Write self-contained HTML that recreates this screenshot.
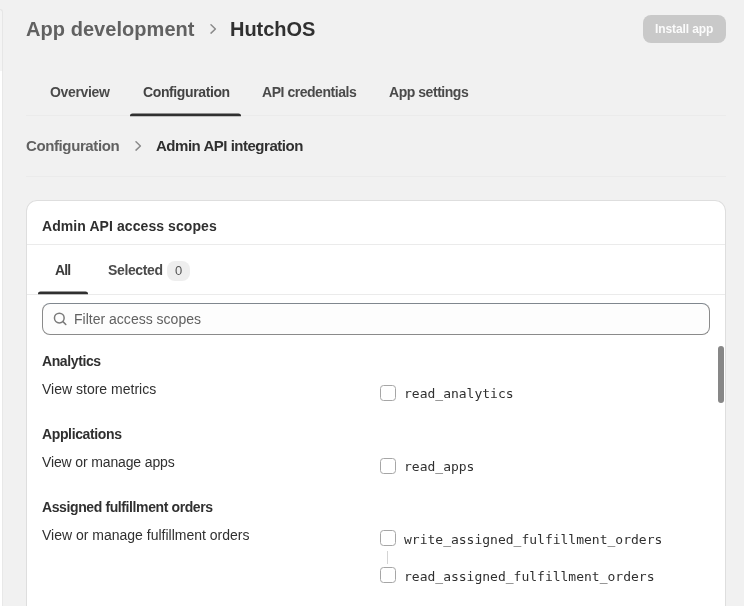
<!DOCTYPE html>
<html lang="en">
<head>
<meta charset="utf-8">
<title>HutchOS - App development - Admin API integration</title>
<style>
html,body{margin:0;padding:0}
body{width:744px;height:606px;overflow:hidden;background:#f1f1f1;font-family:"Liberation Sans",sans-serif}
.abs{position:absolute}
.t{position:absolute;margin:0;padding:0;white-space:nowrap;display:block;text-decoration:none;will-change:transform}
svg{position:absolute;overflow:visible}
/* left rail sliver */
#strip1{left:0;top:9px;width:2px;height:61px;background:#f4f4f4;border-right:1px solid #e6e6e6;border-top:1px solid #e6e6e6;border-top-right-radius:4px}
#strip2{left:0;top:71px;width:2px;height:535px;background:#fff;border-right:1px solid #e8e8e8}
/* page header */
#btn{left:643px;top:15px;width:83px;height:28px;border-radius:8px;background:#c9c9c9}
.hr{position:absolute;height:1px;background:#ebebeb}
/* card */
#card{left:26px;top:200px;width:700px;height:420px;background:#fff;border-radius:11px;box-shadow:0 0 0 1px #dedede inset}
#badge{left:167px;top:261px;width:23px;height:20px;border-radius:8px;background:#eeeeee}
#search{left:42px;top:303px;width:666px;height:30px;border:1px solid #8a8a8a;border-top-color:#80878e;border-radius:8px;background:#fdfdfd}
#sb{left:718px;top:346px;width:6px;height:57px;border-radius:3px;background:#878787}
.cb{position:absolute;left:380px;width:14px;height:14px;border:1px solid #a6a6a6;border-radius:3.5px;background:#fff}
#conn{left:387px;top:551px;width:1px;height:13px;background:#d4d4d4}
/* text placement */
#t1{left:26.20px;top:19.00px;font:700 20px/20px "Liberation Sans", sans-serif;color:#616161;letter-spacing:0.051px}
#t2{left:230.15px;top:19.00px;font:700 20px/20px "Liberation Sans", sans-serif;color:#303030;letter-spacing:-0.030px}
#t3{left:655.00px;top:23.00px;font:700 12px/12px "Liberation Sans", sans-serif;color:#fbfbfb;letter-spacing:-0.108px}
#t4{left:50.00px;top:85.00px;font:700 14px/14px "Liberation Sans", sans-serif;color:#4a4a4a;letter-spacing:-0.347px}
#t5{left:142.96px;top:85.00px;font:700 14px/14px "Liberation Sans", sans-serif;color:#434343;letter-spacing:-0.383px}
#t6{left:261.90px;top:85.00px;font:700 14px/14px "Liberation Sans", sans-serif;color:#4a4a4a;letter-spacing:-0.463px}
#t7{left:389.04px;top:85.00px;font:700 14px/14px "Liberation Sans", sans-serif;color:#4a4a4a;letter-spacing:-0.458px}
#t8{left:26.00px;top:138.00px;font:700 15px/15px "Liberation Sans", sans-serif;color:#616161;letter-spacing:-0.390px}
#t9{left:156.03px;top:138.00px;font:700 15px/15px "Liberation Sans", sans-serif;color:#303030;letter-spacing:-0.482px}
#t10{left:42.04px;top:219.00px;font:700 14px/14px "Liberation Sans", sans-serif;color:#303030;letter-spacing:0.078px}
#t11{left:55.00px;top:263.00px;font:700 14px/14px "Liberation Sans", sans-serif;color:#3a3a3a;letter-spacing:-0.855px}
#t12{left:108.30px;top:263.00px;font:700 14px/14px "Liberation Sans", sans-serif;color:#4a4a4a;letter-spacing:-0.360px}
#t13{left:174.85px;top:264.00px;font:400 13px/13px "Liberation Sans", sans-serif;color:#555555;letter-spacing:0.000px}
#t14{left:74.12px;top:312.00px;font:400 14px/14px "Liberation Sans", sans-serif;color:#616161;letter-spacing:0.009px}
#t15{left:42.20px;top:354.00px;font:700 14px/14px "Liberation Sans", sans-serif;color:#303030;letter-spacing:-0.394px}
#t16{left:42.20px;top:382.00px;font:400 14px/14px "Liberation Sans", sans-serif;color:#303030;letter-spacing:0.005px}
#t17{left:42.20px;top:427.00px;font:700 14px/14px "Liberation Sans", sans-serif;color:#303030;letter-spacing:-0.366px}
#t18{left:42.20px;top:455.00px;font:400 14px/14px "Liberation Sans", sans-serif;color:#303030;letter-spacing:-0.135px}
#t19{left:42.20px;top:500.00px;font:700 14px/14px "Liberation Sans", sans-serif;color:#303030;letter-spacing:-0.391px}
#t20{left:42.20px;top:528.00px;font:400 14px/14px "Liberation Sans", sans-serif;color:#303030;letter-spacing:-0.003px}
#m1{left:404.34px;top:387.00px;font:400 13px/13px "DejaVu Sans Mono", "Liberation Mono", monospace;color:#303030;letter-spacing:0.000px}
#m2{left:404.34px;top:460.00px;font:400 13px/13px "DejaVu Sans Mono", "Liberation Mono", monospace;color:#303030;letter-spacing:0.000px}
#m3{left:404.34px;top:533.00px;font:400 13px/13px "DejaVu Sans Mono", "Liberation Mono", monospace;color:#303030;letter-spacing:0.000px}
#m4{left:404.34px;top:570.00px;font:400 13px/13px "DejaVu Sans Mono", "Liberation Mono", monospace;color:#303030;letter-spacing:0.000px}
</style>
</head>
<body>
<div class="abs ns" id="strip1"></div>
<div class="abs ns" id="strip2"></div>

<header>
  <nav aria-label="Breadcrumb">
    <a class="t" id="t1">App development</a>
    <svg class="ns" style="left:209px;top:23px" width="9" height="12" viewBox="0 0 9 12"><path d="M2 1.8 L6.4 6.05 L2 10.1" fill="none" stroke="#8a8a8a" stroke-width="1.5" stroke-linecap="round" stroke-linejoin="round"/></svg>
    <h1 class="t" id="t2">HutchOS</h1>
  </nav>
  <div class="abs ns" id="btn" role="button" aria-disabled="true"></div>
  <span class="t" id="t3">Install app</span>
</header>

<nav aria-label="App sections">
  <div class="hr ns" style="left:26px;top:115px;width:700px"></div>
  <a class="t" id="t4">Overview</a>
  <a class="t" id="t5">Configuration</a>
  <a class="t" id="t6">API credentials</a>
  <a class="t" id="t7">App settings</a>
</nav>

<main>
  <nav aria-label="Configuration breadcrumb">
    <a class="t" id="t8">Configuration</a>
    <svg class="ns" style="left:134px;top:140px" width="9" height="12" viewBox="0 0 9 12"><path d="M2 1.8 L6.4 6.05 L2 10.1" fill="none" stroke="#8a8a8a" stroke-width="1.5" stroke-linecap="round" stroke-linejoin="round"/></svg>
    <span class="t" id="t9">Admin API integration</span>
    <div class="hr ns" style="left:26px;top:176px;width:700px"></div>
  </nav>

  <section aria-label="Admin API access scopes">
    <div class="abs ns" id="card"></div>
    <h2 class="t" id="t10">Admin API access scopes</h2>
    <div class="hr ns" style="left:27px;top:244px;width:698px"></div>

    <div role="tablist">
      <span class="t" id="t11" role="tab">All</span>
      <span class="t" id="t12" role="tab">Selected</span>
      <div class="abs ns" id="badge"></div>
      <span class="t" id="t13">0</span>
      <div class="hr ns" style="left:27px;top:294px;width:698px"></div>
    </div>

    <div role="search">
      <div class="abs ns" id="search"></div>
      <svg class="ns" style="left:53px;top:312px" width="14" height="14" viewBox="0 0 14 14"><circle cx="6.3" cy="6.05" r="4.85" fill="none" stroke="#7a7a7a" stroke-width="1.5"/><path d="M9.95 9.6 L12.8 12.5" stroke="#7a7a7a" stroke-width="1.5" stroke-linecap="round"/></svg>
      <span class="t" id="t14">Filter access scopes</span>
    </div>
    <div class="abs ns" id="sb"></div>

    <div class="scope-group">
      <h3 class="t" id="t15">Analytics</h3>
      <p class="t" id="t16">View store metrics</p>
      <div class="cb ns" style="top:385px"></div>
      <label class="t" id="m1">read_analytics</label>
    </div>

    <div class="scope-group">
      <h3 class="t" id="t17">Applications</h3>
      <p class="t" id="t18">View or manage apps</p>
      <div class="cb ns" style="top:458px"></div>
      <label class="t" id="m2">read_apps</label>
    </div>

    <div class="scope-group">
      <h3 class="t" id="t19">Assigned fulfillment orders</h3>
      <p class="t" id="t20">View or manage fulfillment orders</p>
      <div class="cb ns" style="top:530px"></div>
      <label class="t" id="m3">write_assigned_fulfillment_orders</label>
      <div class="abs ns" id="conn"></div>
      <div class="cb ns" style="top:567px"></div>
      <label class="t" id="m4">read_assigned_fulfillment_orders</label>
    </div>
  </section>
</main>

<!-- active tab indicators -->
<svg class="ns" style="left:0;top:0" width="744" height="606"><path d="M130 116.2 V115.6 Q130 113.6 132.5 113.6 H238.5 Q241 113.6 241 115.6 V116.2 Z" fill="#303030"/><path d="M38 294.2 V293.6 Q38 291.6 40.5 291.6 H85.5 Q88 291.6 88 293.6 V294.2 Z" fill="#303030"/></svg>
</body>
</html>
